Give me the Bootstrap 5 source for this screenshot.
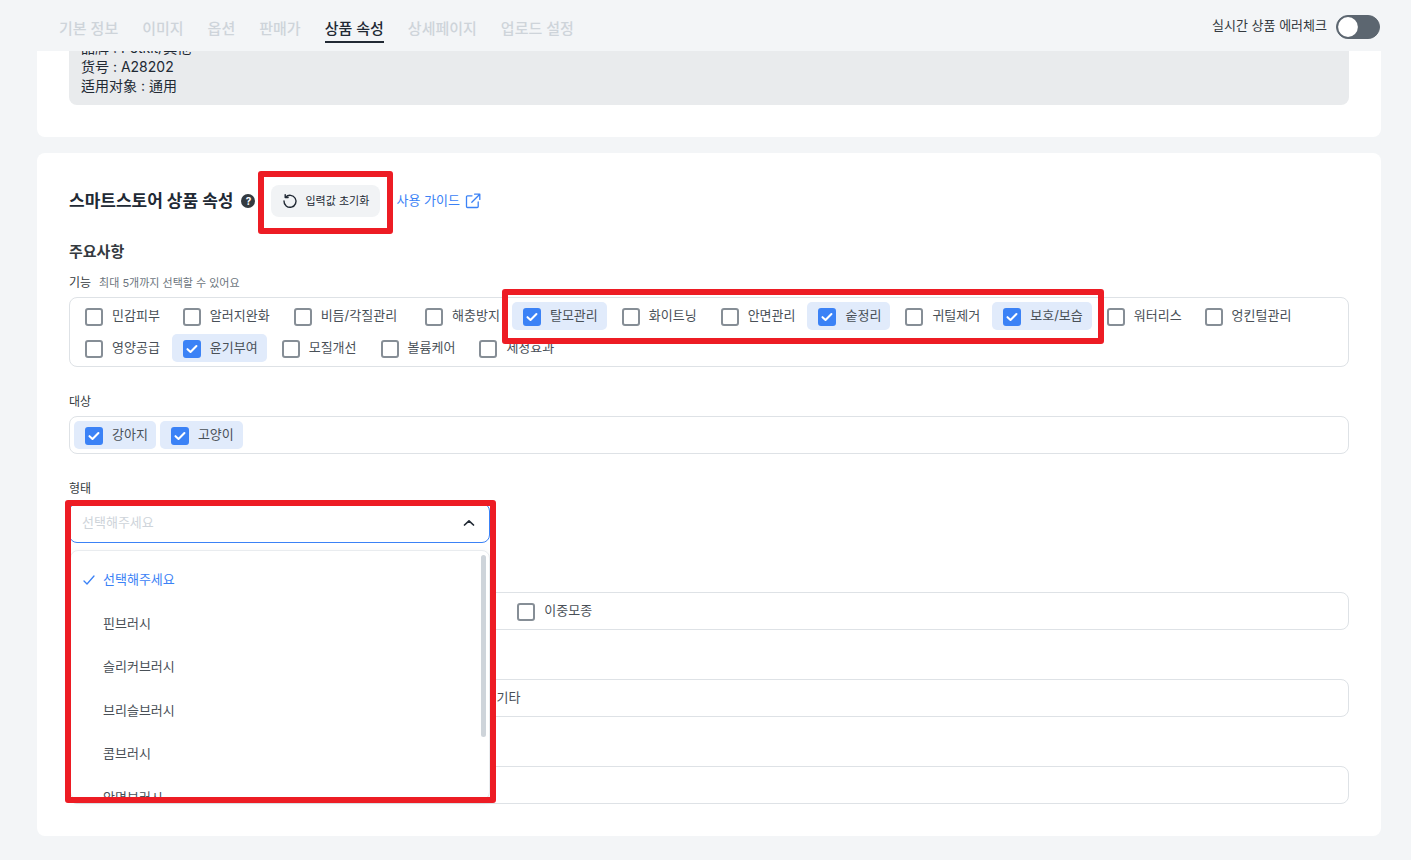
<!DOCTYPE html>
<html lang="ko">
<head>
<meta charset="utf-8">
<title>상품 속성</title>
<link href="https://cdn.jsdelivr.net/npm/bootstrap@5.3.0/dist/css/bootstrap.min.css" rel="stylesheet">
<style>
html,body{height:860px;overflow:hidden}
body{background:#f3f5f7;font-family:Inter,"Noto Sans CJK KR","Noto Sans",sans-serif;color:#212934;font-size:13px;position:relative}
.top-bar{height:51px;padding:0 31px 0 59px;background:#f3f5f7}
.tab-list{gap:24px;height:100%}
.tab-item{font-size:15px;font-weight:500;color:#ced4da;height:28px;margin-top:15px;line-height:28px;white-space:nowrap}
.tab-item.is-on{color:#212934;border-bottom:2px solid #212934}
.live-area{margin-top:1px}
.live-label{font-size:13px;color:#343a40;margin-right:1px}
.form-switch .live-switch{width:44px;height:24px;margin:1px 0 0;background-color:#5c6670;border-color:#5c6670;background-image:url("data:image/svg+xml,%3csvg xmlns='http://www.w3.org/2000/svg' viewBox='-4 -4 8 8'%3e%3ccircle r='3.6' fill='%23fff'/%3e%3c/svg%3e")}
.page-body{padding:0 30px 0 37px}
.sheet{background:#fff;border-radius:8px;padding:0 32px}
.sheet-first{border-radius:0 0 8px 8px;padding-bottom:32px;margin-bottom:16px}
.spec-box{background:#e9ebed;height:54px;border-radius:0 0 8px 8px;padding:0 12px;overflow:hidden;font-size:14px;line-height:19px;color:#212934}
.spec-box p{margin:0}
.spec-box p:first-child{margin-top:-13px}
.sheet-second{height:683px;padding-top:32px}
.title-row{height:32px}
.main-title{font-size:17px;font-weight:700;margin:0;color:#212934}
.help-dot{width:14px;height:14px;border-radius:50%;background:#343a40;color:#fff;font-size:10px;font-weight:700;line-height:14px;text-align:center;margin:0 16px 0 8px}
.reset-btn{background:#f1f3f5;border:0;border-radius:8px;height:32px;width:109px;padding:0 0 0 11px;font-size:11px;font-weight:400;color:#212934;gap:7px}
.guide-link{font-size:13px;color:#3b82f6;text-decoration:none;margin-left:16px;gap:5px}
.sub-title{font-size:15px;font-weight:700;margin:23px 0 0;line-height:24px;color:#343a40}
.field-block{margin-top:25px}
.field-first{margin-top:9px}
.field-label{font-size:12px;line-height:20px;margin-bottom:4px;color:#343a40}
.field-note{font-size:11px;color:#6c757d;margin-left:8px}
.label-low{padding-top:1px;margin-top:-1px}
.chip-box{border:1px solid #dee2e6;border-radius:8px;padding:4px;gap:4px;min-height:38px}
.chip{height:28px;padding:0 9px 0 11px;border-radius:5px;gap:9px;color:#495057;font-size:13px;white-space:nowrap;margin:0}
.chip span{margin-top:-1px}
.chip.is-on{background:#e1ebfb}
.chip-less{padding-right:8px}
.chip-more{padding-right:10px}
.chip-wide{padding-right:13px}
.chip .form-check-input{width:18px;height:18px;margin:1px 0 -1px;border:2px solid #868e96;border-radius:3px;flex:none;float:none}
.chip .form-check-input:checked{background-color:#3b82f6;border-color:#3b82f6;background-size:100% 100%;background-image:url("data:image/svg+xml,%3csvg xmlns='http://www.w3.org/2000/svg' viewBox='0 0 18 18'%3e%3cpath d='M3.2 9.2l3.9 3.7 7.6-7.8' fill='none' stroke='%23fff' stroke-width='2.6' stroke-linecap='round' stroke-linejoin='round'/%3e%3c/svg%3e")}
.select-wrap{width:421px;position:relative}
.select-face{height:40px;border:1px solid #3b82f6;border-radius:8px;padding:0 14px 0 12px;color:#ced4da;font-size:13px;background:#fff}
.drop-panel{position:absolute;z-index:5;top:47px;left:1px;width:420px;height:250px;background:#fff;border:1px solid #e9ecef;border-radius:8px;overflow:hidden;box-shadow:0 2px 8px rgba(0,0,0,.06)}
.drop-list{padding:7px 0 0 12px}
.drop-item{height:43.6px;gap:8px;color:#495057;font-size:13px}
.drop-item.is-on{color:#3b82f6}
.tick-slot{width:12px;flex:none}
.drop-thumb{position:absolute;top:4px;right:3px;width:5px;height:182px;background:#ced4da;border-radius:3px}
.mark-frame{position:absolute;z-index:10;border:6px solid #ed1c24;border-radius:3px;pointer-events:none}
.mark-a{left:258px;top:171px;width:135px;height:63px}
.mark-b{left:502px;top:289px;width:602px;height:55px}
.mark-c{left:65px;top:500px;width:431px;height:303px}
</style>
</head>
<body>
<header class="top-bar d-flex justify-content-between">
  <nav class="tab-list d-flex">
    <div class="tab-item">기본 정보</div>
    <div class="tab-item">이미지</div>
    <div class="tab-item">옵션</div>
    <div class="tab-item">판매가</div>
    <div class="tab-item is-on">상품 속성</div>
    <div class="tab-item">상세페이지</div>
    <div class="tab-item">업로드 설정</div>
  </nav>
  <div class="live-area d-flex align-items-center gap-2 form-switch p-0">
    <span class="live-label">실시간 상품 에러체크</span>
    <input class="form-check-input live-switch" type="checkbox" role="switch" aria-label="실시간 상품 에러체크">
  </div>
</header>
<main class="page-body">
  <section class="sheet sheet-first">
    <div class="spec-box">
      <p>品牌 : Petkit/其他</p>
      <p>货号 : A28202</p>
      <p>适用对象 : 通用</p>
    </div>
  </section>
  <section class="sheet sheet-second">
    <div class="title-row d-flex align-items-center">
      <h2 class="main-title">스마트스토어 상품 속성</h2>
      <span class="help-dot">?</span>
      <button type="button" class="reset-btn d-flex align-items-center">
        <svg width="16" height="16" viewBox="0 0 16 16" fill="none" stroke="#212934" stroke-width="1.4" stroke-linecap="round" stroke-linejoin="round"><path d="M3.6 4.2A6 6 0 1 1 2 8"/><path d="M3.2 1.6v2.9h2.9"/></svg>
        <span>입력값 초기화</span>
      </button>
      <a class="guide-link d-flex align-items-center" href="#">사용 가이드
        <svg width="16" height="16" viewBox="0 0 16 16" fill="none" stroke="#3b82f6" stroke-width="1.3" stroke-linecap="round" stroke-linejoin="round"><path d="M7 2.8H2.5a1 1 0 0 0-1 1v9.7a1 1 0 0 0 1 1h9.7a1 1 0 0 0 1-1V9"/><path d="M9.6 1.2h5.2v5.2M14.8 1.2 6.8 9.2"/></svg>
      </a>
    </div>
    <h3 class="sub-title">주요사항</h3>

    <div class="field-block field-first">
      <div class="field-label">기능<span class="field-note">최대 5개까지 선택할 수 있어요</span></div>
      <div class="chip-box d-flex flex-wrap">
        <label class="chip chip-less d-flex align-items-center"><input class="form-check-input" type="checkbox"><span>민감피부</span></label>
        <label class="chip d-flex align-items-center"><input class="form-check-input" type="checkbox"><span>알러지완화</span></label>
        <label class="chip chip-wide d-flex align-items-center"><input class="form-check-input" type="checkbox"><span>비듬/각질관리</span></label>
        <label class="chip chip-less d-flex align-items-center"><input class="form-check-input" type="checkbox"><span>해충방지</span></label>
        <label class="chip is-on d-flex align-items-center"><input class="form-check-input" type="checkbox" checked><span>탈모관리</span></label>
        <label class="chip d-flex align-items-center"><input class="form-check-input" type="checkbox"><span>화이트닝</span></label>
        <label class="chip chip-less d-flex align-items-center"><input class="form-check-input" type="checkbox"><span>안면관리</span></label>
        <label class="chip is-on d-flex align-items-center"><input class="form-check-input" type="checkbox" checked><span>숱정리</span></label>
        <label class="chip chip-less d-flex align-items-center"><input class="form-check-input" type="checkbox"><span>귀털제거</span></label>
        <label class="chip is-on d-flex align-items-center"><input class="form-check-input" type="checkbox" checked><span>보호/보습</span></label>
        <label class="chip chip-less d-flex align-items-center"><input class="form-check-input" type="checkbox"><span>워터리스</span></label>
        <label class="chip d-flex align-items-center"><input class="form-check-input" type="checkbox"><span>엉킨털관리</span></label>
        <label class="chip chip-less d-flex align-items-center"><input class="form-check-input" type="checkbox"><span>영양공급</span></label>
        <label class="chip is-on d-flex align-items-center"><input class="form-check-input" type="checkbox" checked><span>윤기부여</span></label>
        <label class="chip d-flex align-items-center"><input class="form-check-input" type="checkbox"><span>모질개선</span></label>
        <label class="chip d-flex align-items-center"><input class="form-check-input" type="checkbox"><span>볼륨케어</span></label>
        <label class="chip d-flex align-items-center"><input class="form-check-input" type="checkbox"><span>세정효과</span></label>
      </div>
    </div>

    <div class="field-block">
      <div class="field-label">대상</div>
      <div class="chip-box d-flex flex-wrap">
        <label class="chip chip-less is-on d-flex align-items-center"><input class="form-check-input" type="checkbox" checked><span>강아지</span></label>
        <label class="chip is-on d-flex align-items-center"><input class="form-check-input" type="checkbox" checked><span>고양이</span></label>
      </div>
    </div>

    <div class="field-block">
      <div class="field-label label-low">형태</div>
      <div class="select-wrap">
        <div class="select-face d-flex align-items-center justify-content-between">
          <span>선택해주세요</span>
          <svg width="12" height="8" viewBox="0 0 12 8" fill="none" stroke="#212934" stroke-width="1.7" stroke-linecap="round" stroke-linejoin="round"><path d="M1.5 6 6 1.8 10.5 6"/></svg>
        </div>
        <div class="drop-panel">
          <div class="drop-list">
            <div class="drop-item is-on d-flex align-items-center"><svg class="tick-slot" height="10" viewBox="0 0 12 10" fill="none" stroke="#3b82f6" stroke-width="1.3" stroke-linecap="round" stroke-linejoin="round"><path d="M1 6l3 3 7-8"/></svg><span>선택해주세요</span></div>
            <div class="drop-item d-flex align-items-center"><span class="tick-slot"></span><span>핀브러시</span></div>
            <div class="drop-item d-flex align-items-center"><span class="tick-slot"></span><span>슬리커브러시</span></div>
            <div class="drop-item d-flex align-items-center"><span class="tick-slot"></span><span>브리슬브러시</span></div>
            <div class="drop-item d-flex align-items-center"><span class="tick-slot"></span><span>콤브러시</span></div>
            <div class="drop-item d-flex align-items-center"><span class="tick-slot"></span><span>안면브러시</span></div>
          </div>
          <div class="drop-thumb"></div>
        </div>
      </div>
    </div>

    <div class="field-block">
      <div class="field-label">모종</div>
      <div class="chip-box d-flex flex-wrap">
        <label class="chip d-flex align-items-center"><input class="form-check-input" type="checkbox"><span>단모종</span></label>
        <label class="chip d-flex align-items-center"><input class="form-check-input" type="checkbox"><span>곱슬모종</span></label>
        <label class="chip d-flex align-items-center"><input class="form-check-input" type="checkbox"><span>부드러운모종</span></label>
        <label class="chip chip-more d-flex align-items-center"><input class="form-check-input" type="checkbox"><span>뻣뻣한털모종</span></label>
        <label class="chip d-flex align-items-center"><input class="form-check-input" type="checkbox"><span>이중모종</span></label>
      </div>
    </div>

    <div class="field-block">
      <div class="field-label">재질</div>
      <div class="chip-box d-flex flex-wrap">
        <label class="chip d-flex align-items-center"><input class="form-check-input" type="checkbox"><span>플라스틱</span></label>
        <label class="chip d-flex align-items-center"><input class="form-check-input" type="checkbox"><span>스테인리스</span></label>
        <label class="chip d-flex align-items-center"><input class="form-check-input" type="checkbox"><span>실리콘</span></label>
        <label class="chip chip-more d-flex align-items-center"><input class="form-check-input" type="checkbox"><span>천연모</span></label>
        <label class="chip d-flex align-items-center"><input class="form-check-input" type="checkbox"><span>기타</span></label>
      </div>
    </div>

    <div class="field-block">
      <div class="field-label">구성</div>
      <div class="chip-box d-flex flex-wrap">
        <label class="chip d-flex align-items-center"><input class="form-check-input" type="checkbox"><span>단품</span></label>
      </div>
    </div>
  </section>
</main>
<div class="mark-frame mark-a"></div>
<div class="mark-frame mark-b"></div>
<div class="mark-frame mark-c"></div>
<script src="https://cdn.jsdelivr.net/npm/bootstrap@5.3.0/dist/js/bootstrap.bundle.min.js"></script>
</body>
</html>
